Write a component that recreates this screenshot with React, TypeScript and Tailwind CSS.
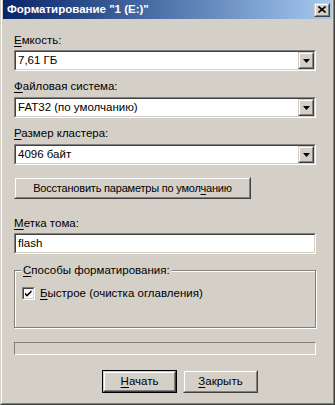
import React from 'react';

const font = { fontFamily: '"Liberation Sans", Arial, sans-serif' };

// classic win2k raised frame
const Raised = ({ className = '', children }: { className?: string; children?: React.ReactNode }) => (
    <div className={`shrink-0 border border-t-[#d4d0c8] border-l-[#d4d0c8] border-r-[#404040] border-b-[#404040] ${className}`}>
        <div className="w-full h-full border border-t-white border-l-white border-r-[#808080] border-b-[#808080] bg-[#d4d0c8] flex items-center justify-center overflow-hidden">
            {children}
        </div>
    </div>
);

const Sunken = ({ className = '', children }: { className?: string; children?: React.ReactNode }) => (
    <div className={`shrink-0 border border-t-[#808080] border-l-[#808080] border-r-white border-b-white ${className}`}>
        <div className="w-full h-full border border-t-[#404040] border-l-[#404040] border-r-[#d4d0c8] border-b-[#d4d0c8] bg-white flex items-center">
            {children}
        </div>
    </div>
);

const Combo = ({ value }: { value: string }) => (
    <Sunken className="h-[21px] w-[302px]">
        <span className="flex-1 pl-[2px] text-[11.5px] leading-none text-black">{value}</span>
        <Raised className="w-[16px] h-[17px]">
            <svg width="7" height="4" viewBox="0 0 7 4">
                <path d="M0 0h7L3.5 4z" fill="#000" />
            </svg>
        </Raised>
    </Sunken>
);

const Label = ({ k, rest }: { k: string; rest: string }) => (
    <div className="h-[14px] leading-[14px] text-[11.5px] text-black">
        <span className="underline underline-offset-2">{k}</span>
        {rest}
    </div>
);

export default function App() {
    return (
        <div style={font} className="w-[335px] h-[405px] bg-[#d4d0c8] border-l border-r border-b border-l-[#d4d0c8] border-r-[#404040] border-b-[#404040]">
            <div className="w-full h-full border-l border-r border-b border-l-white border-r-[#808080] border-b-[#808080] px-px pb-px flex flex-col">

                {/* Title bar */}
                <div className="h-[19px] bg-linear-to-r from-[#0a246a] to-[#a6caf0] flex items-center justify-between pl-[4px] pr-[2px]">
                    <span className="text-white font-bold text-[11.5px] leading-none">Форматирование "1 (E:)"</span>
                    <Raised className="w-[16px] h-[14px]">
                        <svg width="8" height="7" viewBox="0 0 8 7">
                            <path d="M0.5 0.5l7 6M7.5 0.5l-7 6" stroke="#000" strokeWidth="1.6" />
                        </svg>
                    </Raised>
                </div>

                {/* Body */}
                <div className="flex flex-col items-start pl-[11px] pr-[16px] pt-[14px]">
                    <Label k="Е" rest="мкость:" />
                    <div className="mt-[3px]"><Combo value="7,61 ГБ" /></div>

                    <div className="mt-[8px]"><Label k="Ф" rest="айловая система:" /></div>
                    <div className="mt-[4px]"><Combo value="FAT32 (по умолчанию)" /></div>

                    <div className="mt-[8px]"><Label k="Р" rest="азмер кластера:" /></div>
                    <div className="mt-[4px]"><Combo value="4096 байт" /></div>

                    <Raised className="mt-[12px] w-[237px] h-[22px]">
                        <span className="text-[11px] tracking-[-0.2px] leading-none text-black whitespace-nowrap">
                            Восстановить параметры по умол<span className="underline underline-offset-2">ч</span>анию
                        </span>
                    </Raised>

                    <div className="mt-[17px]"><Label k="М" rest="етка тома:" /></div>
                    <Sunken className="mt-[3px] h-[21px] w-[302px]">
                        <span className="pl-[2px] text-[11.5px] leading-none text-black">flash</span>
                    </Sunken>

                    {/* Group box */}
                    <div className="relative mt-[16px] w-[302px] h-[58px] border border-[#808080] shadow-[inset_1px_1px_white,1px_1px_white] pt-[16px] pl-[7px]">
                        <div className="absolute -top-[8px] left-[6px] px-[2px] bg-[#d4d0c8] h-[14px] leading-[14px] text-[11.5px] text-black">
                            <span className="underline underline-offset-2">С</span>пособы форматирования:
                        </div>
                        <div className="flex items-center gap-[5px]">
                            <Sunken className="w-[13px] h-[13px]">
                                <svg width="9" height="9" viewBox="0 0 9 9" className="block">
                                    <path d="M1 3.5l2 2 4.5-4.5v2.2l-4.5 4.5-2-2z" fill="#000" />
                                </svg>
                            </Sunken>
                            <span className="text-[11.5px] leading-none text-black">
                                <span className="underline underline-offset-2">Б</span>ыстрое (очистка оглавления)
                            </span>
                        </div>
                    </div>

                    {/* Progress */}
                    <div className="mt-[14px] w-[302px] h-[13px] border border-t-[#808080] border-l-[#808080] border-r-white border-b-white" />

                    {/* Buttons */}
                    <div className="mt-[15px] flex gap-[6px] pl-[88px]">
                        <div className="border border-black">
                            <Raised className="w-[73px] h-[21px]">
                                <span className="text-[11.5px] leading-none text-black">
                                    <span className="underline underline-offset-2">Н</span>ачать
                                </span>
                            </Raised>
                        </div>
                        <Raised className="w-[75px] h-[23px]">
                            <span className="text-[11.5px] leading-none text-black">
                                <span className="underline underline-offset-2">З</span>акрыть
                            </span>
                        </Raised>
                    </div>
                </div>
            </div>
        </div>
    );
}
